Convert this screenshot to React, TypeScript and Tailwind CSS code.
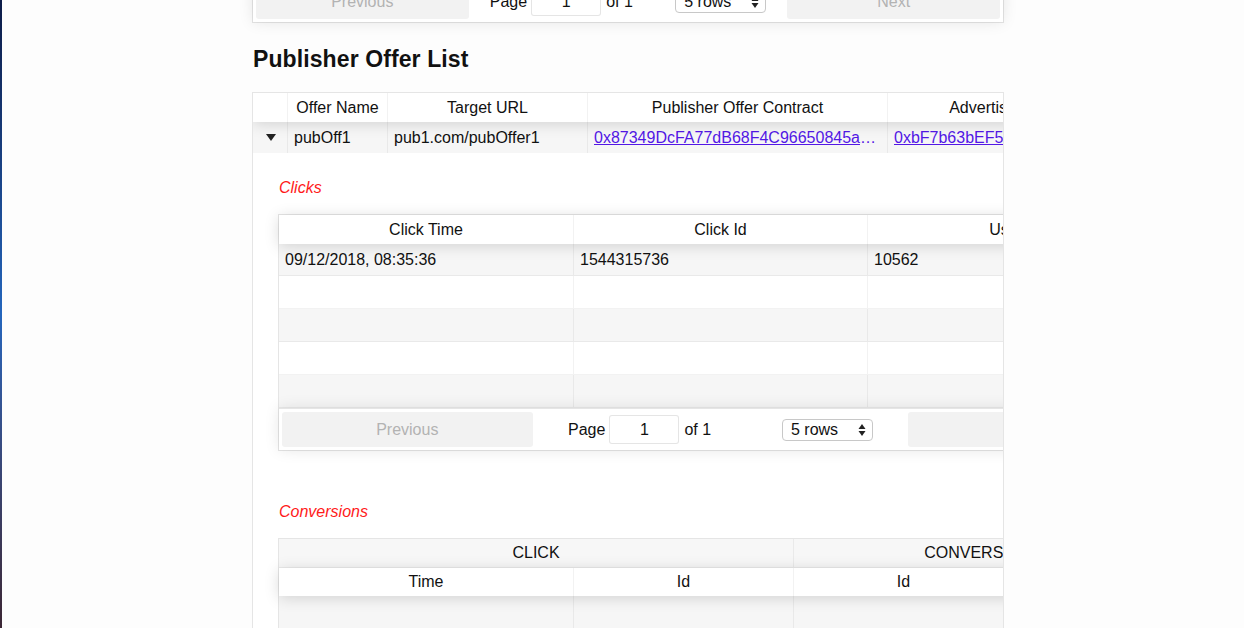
import React from "react";

const font = "font-['Liberation_Sans',Arial,sans-serif]";

function SelectBox() {
  return (
    <div className="flex h-[22px] w-[91px] items-center justify-between rounded-[4px] border border-[#c8c8c8] bg-white pl-[8px] pr-[6px] text-[16px] text-[#111]">
      <span className="leading-none">5 rows</span>
      <svg width="8" height="14" viewBox="0 0 8 14">
        <path d="M4 1 L7.5 6 L0.5 6 Z" fill="#222" />
        <path d="M4 13 L7.5 8 L0.5 8 Z" fill="#222" />
      </svg>
    </div>
  );
}

function Pagination({ topBorder = true }: { topBorder?: boolean }) {
  return (
    <div
      className={`relative z-10 flex p-[3px] shadow-[0_0_15px_0_rgba(0,0,0,0.1)] ${
        topBorder ? "border-t border-black/10" : ""
      }`}
    >
      <div className="flex-1">
        <div className="flex h-[35px] w-full items-center justify-center rounded-[3px] bg-[#f2f2f2] text-[16px] text-[#b3b3b3]">
          Previous
        </div>
      </div>
      <div className="flex flex-[1.5] items-center justify-around text-[16px] text-[#111]">
        <div className="flex items-center">
          <span>Page</span>
          <div className="ml-[4px] mr-[5px] flex h-[29px] w-[70px] items-center justify-center rounded-[3px] border border-black/10 bg-white">
            1
          </div>
          <span>of 1</span>
        </div>
        <SelectBox />
      </div>
      <div className="flex-1">
        <div className="flex h-[35px] w-full items-center justify-center rounded-[3px] bg-[#f2f2f2] text-[16px] text-[#b3b3b3]">
          Next
        </div>
      </div>
    </div>
  );
}

const headShadow = "relative z-10 shadow-[0_2px_15px_0_rgba(0,0,0,0.15)] bg-white";

function ClicksTable() {
  const cols = ["w-[295px]", "w-[294px]", "w-[294px]"];
  const heads = ["Click Time", "Click Id", "User Id"];
  const rows = [
    ["09/12/2018, 08:35:36", "1544315736", "10562"],
    ["", "", ""],
    ["", "", ""],
    ["", "", ""],
    ["", "", ""],
  ];
  const heights = ["h-[32px]", "h-[33px]", "h-[33px]", "h-[33px]", "h-[33px]"];
  return (
    <div className="w-[885px] shrink-0 border border-black/10">
      <div className={`flex h-[29px] ${headShadow}`}>
        {heads.map((h, i) => (
          <div
            key={h}
            className={`${cols[i]} flex shrink-0 items-center justify-center border-r border-black/5 text-[16px] text-[#111] last:border-r-0`}
          >
            {h}
          </div>
        ))}
      </div>
      {rows.map((r, ri) => (
        <div
          key={ri}
          className={`flex ${heights[ri]} border-b border-black/5 ${ri % 2 === 0 ? "bg-[#f6f6f6]" : "bg-white"}`}
        >
          {r.map((c, ci) => (
            <div
              key={ci}
              className={`${cols[ci]} flex shrink-0 items-center border-r border-black/5 pl-[6px] pr-[5px] text-[16px] text-[#111] last:border-r-0`}
            >
              {c}
            </div>
          ))}
        </div>
      ))}
      <Pagination />
    </div>
  );
}

function ConversionsTable() {
  return (
    <div className="w-[885px] shrink-0 border border-b-0 border-black/10">
      <div className="flex h-[29px] border-b border-black/5 bg-[#f7f7f7] text-[16px] text-[#111]">
        <div className="flex w-[515px] shrink-0 items-center justify-center border-r border-black/5">CLICK</div>
        <div className="flex w-[368px] shrink-0 items-center justify-center">CONVERSION</div>
      </div>
      <div className={`flex h-[28px] text-[16px] text-[#111] ${headShadow}`}>
        <div className="flex w-[295px] shrink-0 items-center justify-center border-r border-black/5">Time</div>
        <div className="flex w-[220px] shrink-0 items-center justify-center border-r border-black/5">Id</div>
        <div className="flex w-[220px] shrink-0 items-center justify-center border-r border-black/5">Id</div>
        <div className="flex w-[148px] shrink-0 items-center justify-center">Time</div>
      </div>
      <div className="flex h-[33px] bg-[#f6f6f6]">
        <div className="w-[295px] shrink-0 border-r border-black/5" />
        <div className="w-[220px] shrink-0 border-r border-black/5" />
        <div className="w-[220px] shrink-0 border-r border-black/5" />
        <div className="w-[148px] shrink-0" />
      </div>
    </div>
  );
}

export default function App() {
  return (
    <div className={`flex h-[628px] w-[1244px] overflow-hidden bg-[#fdfdfd] ${font}`}>
      <div className="w-[2px] shrink-0 bg-gradient-to-b from-[#0d1c48] via-[#2466bd] to-[#3b2634]" />
      <div className="ml-[250px] flex w-[752px] shrink-0 flex-col">
        <div className="-mt-[20px] border border-black/10 bg-white">
          <Pagination topBorder={false} />
        </div>

        <h2 className="mt-[22px] pl-[1px] text-[23px] font-bold leading-[28px] tracking-[0.1px] text-[#111]">
          Publisher Offer List
        </h2>

        <div className="mt-[19px] flex-1 overflow-hidden border border-b-0 border-black/10 bg-white">
          <div className="w-[1400px]">
            <div className={`flex h-[29px] text-[16px] text-[#111] ${headShadow}`}>
              <div className="w-[35px] shrink-0 border-r border-black/5" />
              <div className="flex w-[100px] shrink-0 items-center justify-center border-r border-black/5">Offer Name</div>
              <div className="flex w-[200px] shrink-0 items-center justify-center border-r border-black/5">Target URL</div>
              <div className="flex w-[300px] shrink-0 items-center justify-center border-r border-black/5">
                Publisher Offer Contract
              </div>
              <div className="flex w-[300px] shrink-0 items-center justify-center border-r border-black/5">
                Advertiser Offer Contract
              </div>
            </div>
            <div className="flex h-[31px] bg-[#f6f6f6] text-[16px] text-[#111]">
              <div className="flex w-[35px] shrink-0 items-center justify-center border-r border-black/5 pl-[2px]">
                <div className="h-0 w-0 border-x-[5px] border-t-[7px] border-x-transparent border-t-[#222]" />
              </div>
              <div className="flex w-[100px] shrink-0 items-center border-r border-black/5 pl-[6px] pr-[5px]">pubOff1</div>
              <div className="flex w-[200px] shrink-0 items-center border-r border-black/5 pl-[6px] pr-[5px]">
                pub1.com/pubOffer1
              </div>
              <div className="flex w-[300px] min-w-0 shrink-0 items-center overflow-hidden border-r border-black/5 pl-[6px] pr-[5px]">
                <a className="block min-w-0 truncate text-[#5318e6] underline" href="#">
                  0x87349DcFA77dB68F4C96650845a1d3C2b9E0F11
                </a>
              </div>
              <div className="flex w-[300px] min-w-0 shrink-0 items-center overflow-hidden border-r border-black/5 pl-[6px] pr-[5px]">
                <a className="block min-w-0 truncate text-[#5318e6] underline" href="#">
                  0xbF7b63bEF5a1C9d2E8f4B6a3c7D0e9F1a2B3c4D5
                </a>
              </div>
            </div>

            <div className="pl-[26px]">
              <p className="mt-[26px] text-[16px] italic leading-[18px] text-[#ff1a1a]">Clicks</p>
              <div className="-ml-[1px] mt-[17px] flex">
                <ClicksTable />
              </div>
              <p className="mt-[52px] text-[16px] italic leading-[18px] text-[#ff1a1a]">Conversions</p>
              <div className="-ml-[1px] mt-[17px] flex">
                <ConversionsTable />
              </div>
            </div>
          </div>
        </div>
      </div>
    </div>
  );
}
